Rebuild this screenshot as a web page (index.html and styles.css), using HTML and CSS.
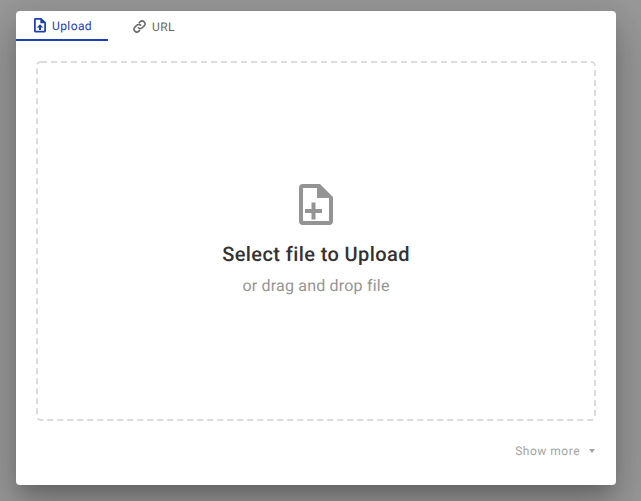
FILE: index.html
```html
<!DOCTYPE html>
<html lang="en">
<head>
<meta charset="utf-8">
<title>Upload</title>
<link rel="stylesheet" href="styles.css">
</head>
<body>
<div class="dialog">
  <div class="tabs">
    <div class="tab active">
      <svg class="upload-icon" viewBox="0 0 34 41"><path fill="currentColor" fill-rule="evenodd" d="M4 0H21L34 13V37a4 4 0 0 1-4 4H4a4 4 0 0 1-4-4V4a4 4 0 0 1 4-4ZM5 5V36H29V15H18V5ZM17 18 26 27H20V34H14V27H8Z"/></svg>
      <span>Upload</span>
    </div>
    <div class="tab second">
      <svg class="link-icon" viewBox="0 0 24 24"><path fill="none" stroke="currentColor" stroke-width="2.4" stroke-linecap="round" d="M10 14a4.5 4.5 0 0 0 6.4 0l3-3a4.5 4.5 0 0 0-6.4-6.4l-1.2 1.2M14 10a4.5 4.5 0 0 0-6.4 0l-3 3a4.5 4.5 0 0 0 6.4 6.4l1.2-1.2"/></svg>
      <span>URL</span>
    </div>
  </div>
  <div class="content">
    <div class="dropzone">
      <svg class="dash" aria-hidden="true"><rect x="1" y="1" rx="4" ry="4" width="558" height="358"/></svg>
      <svg class="file-icon" viewBox="0 0 34 41"><path fill="currentColor" fill-rule="evenodd" d="M4 0H21L34 13V37a4 4 0 0 1-4 4H4a4 4 0 0 1-4-4V4a4 4 0 0 1 4-4ZM4 4V37H30V14H18V4ZM12.5 18.5H16.5V25H23V29H16.5V35.5H12.5V29H6V25H12.5Z"/></svg>
      <div class="title">Select file to Upload</div>
      <div class="subtitle">or drag and drop file</div>
    </div>
    <div class="footer">
      <span>Show more</span>
      <span class="caret"></span>
    </div>
  </div>
</div>
</body>
</html>
```

FILE: styles.css
```css
* { box-sizing: border-box; }
html, body { height: 100%; }
body {
  margin: 0;
  background: #999;
  font-family: Roboto, "Liberation Sans", sans-serif;
  text-rendering: geometricPrecision;
  padding: 11px 25px 16px 16px;
  overflow: hidden;
}
.dialog {
  width: 600px;
  height: 474px;
  background: #fff;
  border-radius: 4px;
  box-shadow: 0 11px 15px -7px rgba(0,0,0,.2), 0 24px 38px 3px rgba(0,0,0,.14), 0 9px 46px 8px rgba(0,0,0,.12);
  display: flex;
  flex-direction: column;
}
.tabs { display: flex; height: 30px; }
.tab {
  width: 92px;
  height: 30px;
  display: flex;
  align-items: center;
  justify-content: center;
  gap: 5px;
  font-size: 12px;
  letter-spacing: .4px;
  color: #666;
}
.tab.active {
  color: #1e40af;
  border-bottom: 2px solid #1e40af;
  gap: 6px;
  padding-left: 2px;
  padding-top: 1px;
}
.tab.second { padding-right: 1px; padding-top: 1px; }
.upload-icon { width: 12px; height: 14.5px; }
.link-icon { width: 15px; height: 15px; }
.content {
  flex: 1;
  display: flex;
  flex-direction: column;
  padding: 20px 20px 0;
}
.dropzone {
  position: relative;
  height: 360px;
  display: flex;
  flex-direction: column;
  align-items: center;
  padding-top: 123px;
}
.dash {
  position: absolute;
  inset: 0;
  width: 100%;
  height: 100%;
  fill: none;
  stroke: #dcdcdc;
  stroke-width: 2;
  stroke-dasharray: 6 4;
}
.file-icon { width: 34px; height: 41px; color: #949494; }
.title {
  margin-top: 15px;
  font-size: 20px;
  line-height: 28px;
  font-weight: 500;
  letter-spacing: .4px;
  color: #333;
}
.subtitle {
  margin-top: 6px;
  font-size: 16px;
  line-height: 24px;
  letter-spacing: .2px;
  color: #949494;
}
.footer {
  display: flex;
  justify-content: flex-end;
  align-items: center;
  gap: 9px;
  margin-top: 21px;
  padding-right: 1px;
  height: 18px;
  font-size: 12px;
  letter-spacing: .5px;
  color: #a3a3a3;
}
.caret {
  width: 0;
  height: 0;
  border-left: 3px solid transparent;
  border-right: 3px solid transparent;
  border-top: 4px solid #a3a3a3;
}
```
